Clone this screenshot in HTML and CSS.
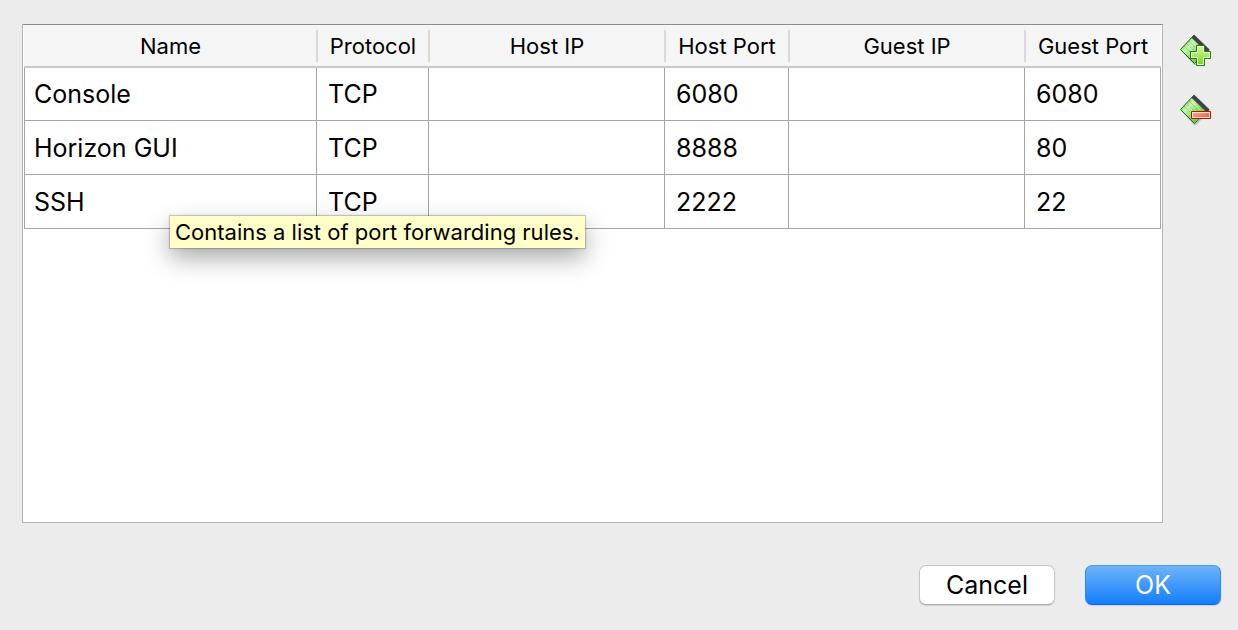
FILE: index.html
```html
<!DOCTYPE html>
<html lang="en">
<head>
<meta charset="utf-8">
<title>Port Forwarding Rules</title>
<link rel="stylesheet" href="styles.css">
</head>
<body>
<svg class="defs" aria-hidden="true">
  <defs>
    <linearGradient id="card-green" x1="0" y1="0" x2="1" y2="1">
      <stop offset="0" stop-color="#3aa62a"/>
      <stop offset=".35" stop-color="#c6f5ae"/>
      <stop offset=".6" stop-color="#7ddc56"/>
      <stop offset="1" stop-color="#4cb82c"/>
    </linearGradient>
    <linearGradient id="plus-green" x1="0" y1="0" x2="0" y2="1">
      <stop offset="0" stop-color="#d2f7a0"/>
      <stop offset=".5" stop-color="#a6ea58"/>
      <stop offset="1" stop-color="#6fd024"/>
    </linearGradient>
    <linearGradient id="minus-red" x1="0" y1="0" x2="1" y2="1">
      <stop offset="0" stop-color="#ffb59a"/>
      <stop offset="1" stop-color="#f4502c"/>
    </linearGradient>
    <g id="card">
      <path d="M2 18 15 32 17 32 32 17 16 31Z" fill="#000" opacity=".2"/>
      <path d="M15 2 1.500 16.500 15.500 30.500 30 17Z" fill="url(#card-green)" stroke="#1d6a14"/>
      <path d="M10 8 24 22M7.500 10.500 21.500 24.500M5 13 19 27" stroke="#277f1b" stroke-dasharray="1 1.500" opacity=".5"/>
      <path d="M9 13 17 21M13 9 21 17" stroke="#e6fbdb" stroke-dasharray="2 1" opacity=".7"/>
      <path d="M15 2 30.500 16.500 28 19.500 12.500 4.500Z" fill="#40404a" stroke="#5c5c64" stroke-width=".6"/>
      <path d="M15.500 1.500 30.500 16.500" stroke="#b4b4bb" stroke-dasharray="1 1.500"/>
    </g>
  </defs>
</svg>
<main class="dialog">
  <div class="editor">
    <div class="frame">
      <table class="rules">
        <colgroup>
          <col class="col-name"><col class="col-protocol"><col><col class="col-host-port"><col><col class="col-guest-port">
        </colgroup>
        <thead>
          <tr><th>Name</th><th>Protocol</th><th>Host IP</th><th>Host Port</th><th>Guest IP</th><th>Guest Port</th></tr>
        </thead>
        <tbody>
          <tr><td>Console</td><td>TCP</td><td></td><td>6080</td><td></td><td>6080</td></tr>
          <tr><td>Horizon GUI</td><td>TCP</td><td></td><td>8888</td><td></td><td>80</td></tr>
          <tr><td>SSH</td><td>TCP</td><td></td><td>2222</td><td></td><td>22</td></tr>
        </tbody>
      </table>
      <div class="tooltip" role="tooltip">Contains a list of port forwarding rules.</div>
    </div>
    <div class="tools">
      <button class="tool" type="button" aria-label="Add rule">
        <svg class="icon" viewBox="0 0 34 34" fill="none">
          <use href="#card"/>
          <path d="M17.500 12.500h8v6h6v7h-6v7h-8v-7h-6v-7h6Z" fill="url(#plus-green)" stroke="#2e7412"/>
          <path d="M18.500 31.500v-7h-6v-5h6v-6h6v6h6v5h-6v7Z" stroke="#f1fce2"/>
        </svg>
      </button>
      <button class="tool" type="button" aria-label="Remove rule">
        <svg class="icon" viewBox="0 0 34 34" fill="none">
          <use href="#card"/>
          <path d="M12.500 18.500h19v7h-19Z" fill="url(#minus-red)" stroke="#a51c08"/>
          <path d="M13.500 24.500v-5h17v5Z" stroke="#ffe0d5"/>
        </svg>
      </button>
    </div>
  </div>
  <div class="actions">
    <button class="button" type="button">Cancel</button>
    <button class="button primary" type="submit">OK</button>
  </div>
</main>
</body>
</html>
```
FILE: styles.css
```css
* {
  box-sizing: border-box;
}

body {
  margin: 0;
  background: #ececec;
  color: #000;
  font-family: Inter, Roboto, "Liberation Sans", sans-serif;
}

.defs {
  position: absolute;
  width: 0;
  height: 0;
}

.dialog {
  display: flex;
  flex-direction: column;
  gap: 42px;
  min-height: 100vh;
  padding: 24px 17px 25px 22px;
}

.editor {
  display: flex;
  flex: 1;
  gap: 16px;
}

.frame {
  position: relative;
  flex: 1;
  padding: 0 1px;
  border: 1px solid #b4b4b4;
  border-top-color: #8c8c8c;
  background: #fff;
}

.rules {
  width: 100%;
  table-layout: fixed;
  border-collapse: separate;
  border-spacing: 0;
}

.col-name {
  width: 293px;
}

.col-protocol {
  width: 112px;
}

.col-host-port {
  width: 124px;
}

.col-guest-port {
  width: 136px;
}

.rules th {
  position: relative;
  height: 43px;
  padding: 0;
  border-bottom: 2px solid #c8c8c8;
  background: #f5f5f5;
  font-size: 22px;
  font-weight: 400;
  line-height: 26px;
  white-space: nowrap;
}

.rules th + th::before {
  content: "";
  position: absolute;
  top: 5px;
  left: -1px;
  width: 2px;
  height: 32px;
  background: #dadada;
}

.rules td {
  height: 54px;
  padding: 0 11px;
  border-right: 1px solid #a6a6a6;
  border-bottom: 1px solid #a6a6a6;
  font-size: 25px;
  line-height: 30px;
}

.rules tbody tr:first-child td {
  height: 53px;
}

.rules td:first-child {
  padding-left: 9px;
  border-left: 1px solid #a6a6a6;
}

.tooltip {
  position: absolute;
  top: 191px;
  left: 147px;
  padding: 0 5px;
  background: #ffffc8;
  box-shadow: 0 0 1px 1px rgba(0, 0, 0, .2), 0 10px 24px rgba(0, 0, 0, .34);
  font-size: 22px;
  line-height: 32px;
  white-space: nowrap;
}

.tools {
  display: flex;
  flex-direction: column;
  gap: 26px;
  width: 42px;
  padding-top: 9px;
}

.tool {
  width: 34px;
  height: 34px;
  padding: 0;
  border: 0;
  background: none;
}

.icon {
  display: block;
  width: 34px;
  height: 34px;
}

.actions {
  display: flex;
  justify-content: flex-end;
  gap: 30px;
}

.button {
  width: 136px;
  height: 40px;
  padding: 0;
  border: 1px solid #c6c6c6;
  border-bottom-color: #acacac;
  border-radius: 7px;
  background: #fff;
  box-shadow: 0 1px 1px rgba(0, 0, 0, .12);
  color: #000;
  font-family: inherit;
  font-size: 25px;
  line-height: 30px;
}

.primary {
  border-color: #4f9ff3 #2f86f5 #0f63f8;
  background: linear-gradient(#6db3f9, #157efc);
  color: #fff;
}
```
